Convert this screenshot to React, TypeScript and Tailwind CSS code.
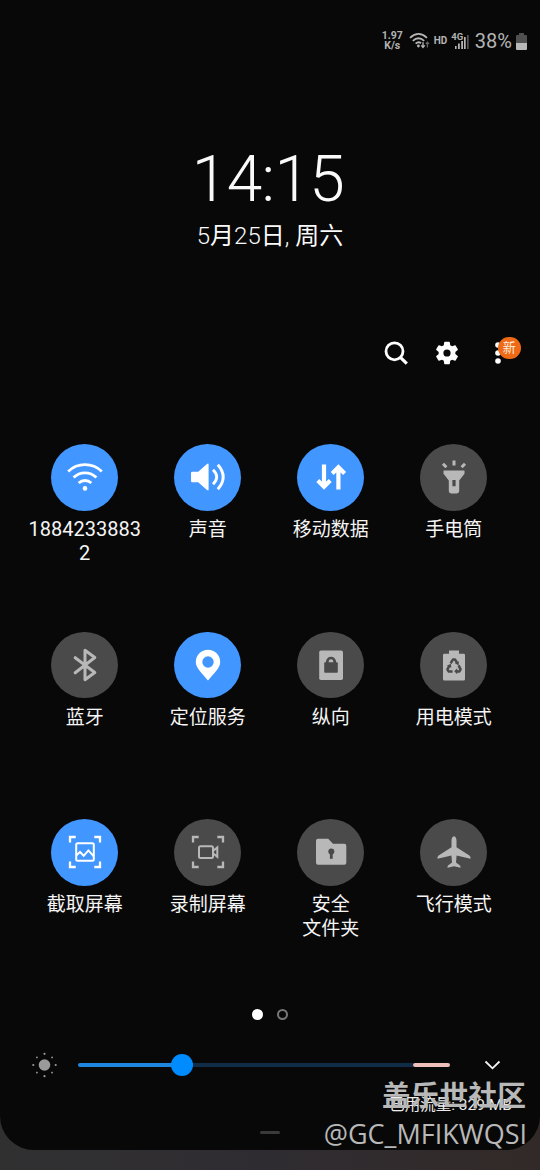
import React from 'react';

interface TileData {
  id: string;
  lines: string[];
  active: boolean;
  icon: React.ReactNode;
}

const Corners = () => (
  <path
    d="M-15-9.5V-15h5.7M9.3-15H15v5.5M15 9.5V15H9.3M-9.3 15H-15V9.5"
    fill="none"
    stroke="currentColor"
    strokeWidth="2.3"
  />
);

const TILES: TileData[] = [
  {
    id: 'wifi',
    lines: ['1884233883', '2'],
    active: true,
    icon: (
      <g fill="none" stroke="currentColor" strokeWidth="2.8">
        <path d="M-16.8-5.6A24 24 0 0 1 16.8-5.6" />
        <path d="M-11.4.6A16 16 0 0 1 11.4.6" />
        <path d="M-6.3 6A9.2 9.2 0 0 1 6.3 6" />
        <circle cy="11.4" r="2.3" fill="currentColor" stroke="none" />
      </g>
    ),
  },
  {
    id: 'sound',
    lines: ['声音'],
    active: true,
    icon: (
      <>
        <path d="M-15.8-5.2H-9.8L-1-13.1Q.6-14.2.6-12.6V12.6Q.6 14.2-1 13.1L-9.8 5.2H-15.8Q-17 5.2-17 4V-4Q-17-5.2-15.8-5.2Z" fill="currentColor" />
        <path d="M5-7.3Q12.4 0 5 7.3M9.8-12.2Q20.6 0 9.8 12.2" fill="none" stroke="currentColor" strokeWidth="2.9" />
      </>
    ),
  },
  {
    id: 'data',
    lines: ['移动数据'],
    active: true,
    icon: (
      <g fill="none" stroke="currentColor" strokeWidth="4.2">
        <path d="M-7-12.6V9M-13.2 3.6L-7 9.8L-.8 3.6" />
        <path d="M7.4 12.6V-9M1.2-3.6L7.4-9.8L13.6-3.6" />
      </g>
    ),
  },
  {
    id: 'torch',
    lines: ['手电筒'],
    active: false,
    icon: (
      <>
        <path
          fillRule="evenodd"
          d="M-10.5-6.5H10.5V-3.2L5.2 3.5V14Q5.2 16.4 2.8 16.4H-2.8Q-5.2 16.4-5.2 14V3.5L-10.5-3.2ZM-1.6 3V9.2H1.6V3Z"
          fill="currentColor"
        />
        <path d="M0-16.4V-11.6M-11-13.2L-7.6-9.8M11-13.2L7.6-9.8" stroke="currentColor" strokeWidth="3" />
      </>
    ),
  },
  {
    id: 'bluetooth',
    lines: ['蓝牙'],
    active: false,
    icon: (
      <path
        d="M-9.8-7.3L9.8 7.5L0 14.7V-14.7L9.8-7.5L-9.8 7.8"
        fill="none"
        stroke="currentColor"
        strokeWidth="3"
        strokeLinejoin="round"
        strokeLinecap="round"
      />
    ),
  },
  {
    id: 'location',
    lines: ['定位服务'],
    active: true,
    icon: (
      <path
        fillRule="evenodd"
        d="M0 15.6C-5 9-12.2 3.5-12.2-3A12.2 12.2 0 0 1 12.2-3C12.2 3.5 5 9 0 15.6ZM0-8.7A5.7 5.7 0 1 0 0 2.7A5.7 5.7 0 1 0 0-8.7Z"
        fill="currentColor"
      />
    ),
  },
  {
    id: 'portrait',
    lines: ['纵向'],
    active: false,
    icon: (
      <>
        <rect x="-11.8" y="-14.6" width="23.8" height="29.6" rx="1.8" fill="currentColor" />
        <rect x="-6.8" y="-2.7" width="13.6" height="10.4" rx="1" fill="#4a4a4a" />
        <path d="M-3.7-2V-3.3A3.7 3.7 0 0 1 3.7-3.3V-2" fill="none" stroke="#4a4a4a" strokeWidth="2.7" />
      </>
    ),
  },
  {
    id: 'power',
    lines: ['用电模式'],
    active: false,
    icon: (
      <>
        <path d="M-5-14.5H5V-11.3H9.6Q11-11.3 11-9.9V14.2Q11 15.6 9.6 15.6H-9.6Q-11 15.6-11 14.2V-9.9Q-11-11.3-9.6-11.3H-5Z" fill="currentColor" />
        <g fill="none" stroke="#4a4a4a" strokeWidth="2.5" strokeLinejoin="round">
          <path d="M-3.4-1.6L-1-5.6H1L2.8-2.6" />
          <path d="M-1.4 6.4H-5.4L-6.6 4.4L-4.8 1.2" />
          <path d="M4.6.4L6.6 4.4L5.4 6.4H2.6" />
        </g>
        <path d="M.6-1.9L4.8-3.8L4.7.4ZM-7.2.7L-3.2-1.2L-2.6 2.8ZM3.2 3.2V9.2L.2 6.3Z" fill="#4a4a4a" />
      </>
    ),
  },
  {
    id: 'screenshot',
    lines: ['截取屏幕'],
    active: true,
    icon: (
      <>
        <Corners />
        <g fill="none" stroke="currentColor" strokeWidth="2">
          <rect x="-8.8" y="-8.8" width="17.6" height="17.6" rx="1.5" />
          <path d="M-8.8 3.6L-5 0L-1.3 3.8L3.4-1.6L8.8 4.4" />
        </g>
      </>
    ),
  },
  {
    id: 'recorder',
    lines: ['录制屏幕'],
    active: false,
    icon: (
      <>
        <Corners />
        <g fill="none" stroke="currentColor" strokeWidth="2">
          <rect x="-9" y="-5.8" width="14" height="11.8" rx="1.5" />
          <path d="M5.3-1.2L9.3-4.6V4.8L5.3 1.4" />
        </g>
      </>
    ),
  },
  {
    id: 'folder',
    lines: ['安全', '文件夹'],
    active: false,
    icon: (
      <>
        <path d="M-13-13.2H-2.8L2-8.2H13.4Q15.3-8.2 15.3-6.3V10.8Q15.3 12.7 13.4 12.7H-13Q-15 12.7-15 10.8V-11.3Q-15-13.2-13-13.2Z" fill="currentColor" />
        <circle cx=".3" cy="-.6" r="3" fill="#4a4a4a" />
        <path d="M.3 0V6.8" stroke="#4a4a4a" strokeWidth="2.8" />
      </>
    ),
  },
  {
    id: 'airplane',
    lines: ['飞行模式'],
    active: false,
    icon: (
      <path
        d="M0-15.8C1.7-15.8 2.5-13.5 2.5-11.5V-4.8L15.4 3.4Q17 4.6 16.5 6.8L2.6 3.4L2 10.5L6 13.4Q6.7 14.2 6.5 15.7L0 14.3L-6.5 15.7Q-6.7 14.2-6 13.4L-2 10.5L-2.6 3.4L-16.5 6.8Q-17 4.6-15.4 3.4L-2.5-4.8V-11.5C-2.5-13.5-1.7-15.8 0-15.8Z"
        fill="currentColor"
      />
    ),
  },
];

const Tile = ({ tile }: { tile: TileData }) => (
  <div className="flex h-[187.5px] flex-col items-center">
    <div
      className={`flex size-[66.5px] shrink-0 items-center justify-center rounded-full ${
        tile.active ? 'bg-[#4296ff] text-white' : 'bg-[#4a4a4a] text-[#b8b8b8]'
      }`}
    >
      <svg width="40" height="40" viewBox="-20 -20 40 40">
        {tile.icon}
      </svg>
    </div>
    <div className="mt-[7.5px] text-center text-[19px] leading-[23.5px] whitespace-nowrap text-[#f5f5f5]">
      {tile.lines.map((line) => (
        <div key={line} className={tile.id === 'wifi' ? 'text-[20px]' : ''}>
          {line}
        </div>
      ))}
    </div>
  </div>
);

const StatusBar = () => (
  <div className="flex h-[82px] items-center justify-end pr-[13px] text-[#b4b4b4]">
    <div className="text-center text-[10.5px] leading-[10px] font-bold">
      <div>1.97</div>
      <div>K/s</div>
    </div>
    <svg className="ml-[6px]" width="21" height="18" viewBox="0 0 21 18" fill="none" stroke="currentColor">
      <path d="M1 5.8Q9.5-2 18 5.8M3.8 8.8Q9.5 3.6 15.2 8.8M6.6 11.6Q9.5 9 12 11.2" strokeWidth="1.8" />
      <circle cx="9.4" cy="14" r="1.4" fill="currentColor" stroke="none" />
      <path d="M14 10.2V15M12.2 13.4L14 15.4L15.8 13.4" strokeWidth="1.4" />
      <path d="M18.4 15.5V10.5M16.8 12L18.4 10.2L20 12" stroke="#666" strokeWidth="1.2" />
    </svg>
    <div className="ml-[4px] text-[10px] leading-none font-bold">HD</div>
    {/* 4G + barras de sinal */}
    <div className="relative ml-[4px] h-[18px] w-[18px]">
      <span className="absolute top-0 left-0 text-[9.5px] leading-[9px] font-bold">4G</span>
      <svg className="absolute inset-0" width="18" height="18" viewBox="0 0 18 18">
        <path d="M4 14h1.6v3H4zM7 11.5h1.8V17H7zM10.2 9h1.8v8h-1.8zM13 5h1.7v12H13z" fill="currentColor" />
        <path d="M16 3h1.7v14H16z" fill="#555" />
      </svg>
    </div>
    <div className="ml-[5.5px] text-[20px] leading-none">38%</div>
    <svg className="ml-[4px]" width="11" height="17" viewBox="0 0 11 17">
      <path d="M3 0h5v2h2q1 0 1 1v7H0V3q0-1 1-1h2z" fill="#505050" />
      <path d="M0 10h11v6q0 1-1 1H1q-1 0-1-1z" fill="#b8b8b8" />
    </svg>
  </div>
);

const Toolbar = () => (
  <div className="flex h-[30px] items-center pl-[384px] text-white">
    <svg width="24" height="24" viewBox="0 0 24 24" fill="none" stroke="currentColor">
      <circle cx="10.5" cy="10.3" r="8.5" strokeWidth="2.8" />
      <path d="M16.4 16.4L22.8 22.6" strokeWidth="3.2" />
    </svg>
    <svg className="ml-[25px]" width="28" height="28" viewBox="0 0 24 24" fill="currentColor">
      <path d="M19.14 12.94c.04-.3.06-.61.06-.94s-.02-.64-.07-.94l2.03-1.58a.49.49 0 0 0 .12-.61l-1.92-3.32a.49.49 0 0 0-.59-.22l-2.39.96a7 7 0 0 0-1.62-.94l-.36-2.54a.48.48 0 0 0-.48-.41h-3.84a.48.48 0 0 0-.47.41l-.36 2.54a7.4 7.4 0 0 0-1.62.94l-2.39-.96a.48.48 0 0 0-.59.22L2.74 8.87a.48.48 0 0 0 .12.61l2.03 1.58a6 6 0 0 0 0 1.88l-2.03 1.58a.49.49 0 0 0-.12.61l1.92 3.32c.12.22.37.29.59.22l2.39-.96c.5.38 1.03.7 1.62.94l.36 2.54c.05.24.24.41.48.41h3.84c.24 0 .44-.17.47-.41l.36-2.54a7 7 0 0 0 1.62-.94l2.39.96c.22.08.47 0 .59-.22l1.92-3.32a.48.48 0 0 0-.12-.61zM12 15.1a3.1 3.1 0 1 1 0-6.2 3.1 3.1 0 0 1 0 6.2" />
    </svg>
    <div className="relative ml-[34px]">
      <svg width="6" height="22" viewBox="0 0 6 22" fill="currentColor">
        <circle cx="3" cy="3" r="2.8" />
        <circle cx="3" cy="11" r="2.8" />
        <circle cx="3" cy="19" r="2.8" />
      </svg>
      <span className="absolute -top-[5.5px] left-[3px] flex size-[22.5px] items-center justify-center rounded-full bg-[#ee6a17] text-[13px] leading-none text-[#ffe9dc]">
        新
      </span>
    </div>
  </div>
);

const BrightnessRow = () => (
  <div className="flex h-[26px] items-center pl-[32px]">
    <svg width="26" height="26" viewBox="-12.5 -13 26 26" fill="#9a9a9a">
      <circle r="5.8" />
      {[0, 45, 90, 135, 180, 225, 270, 315].map((deg) => (
        <circle key={deg} cy={deg % 90 === 0 ? -11.2 : -10.7} r={deg % 90 === 0 ? 1.1 : 0.9} transform={`rotate(${deg})`} />
      ))}
    </svg>
    <div className="relative ml-[20px] flex h-[4px] w-[372px] overflow-visible">
      <div className="w-[104px] rounded-l-full bg-[#1f86e0]" />
      <div className="w-[231px] bg-[#102c47]" />
      <div className="w-[37px] rounded-full bg-[#f0bfbc]" />
      <div className="absolute -top-[9px] left-[93px] size-[22px] rounded-full bg-[#008cff]" />
    </div>
    <svg className="ml-[34px]" width="17" height="10" viewBox="0 0 17 10" fill="none" stroke="#f5f5f5" strokeWidth="1.8">
      <path d="M1.5 1.5L8.5 8.3L15.5 1.5" />
    </svg>
  </div>
);

export default function App() {
  return (
    <div className="relative h-[1170px] w-[540px] overflow-hidden bg-linear-to-r from-[#303031] via-[#2f2c31] to-[#322a28] font-['Roboto','Noto_Sans_CJK_SC',sans-serif]">
      <div className="flex h-[1150px] flex-col rounded-b-[34px] bg-[#080808]">
        <StatusBar />

        <div className="flex h-[256px] flex-col items-center text-[#fafafa]">
          <div className="mt-[65px] pr-[4px] text-[64px] leading-[65px] font-light tracking-[-0.6px]">14:15</div>
          <div className="mt-[10px] text-[24px] leading-[28px] font-light">
            5<span className="font-normal">月</span>25<span className="font-normal">日</span>,{' '}
            <span className="font-normal">周六</span>
          </div>
        </div>

        <Toolbar />

        <div className="mt-[76px] grid grid-cols-[repeat(4,123px)] pl-[23.2px]">
          {TILES.map((tile) => (
            <Tile key={tile.id} tile={tile} />
          ))}
        </div>

        <div className="mt-[2px] flex h-[12px] items-center justify-center gap-[14px]">
          <span className="size-[11px] rounded-full bg-white" />
          <span className="size-[11px] rounded-full border-2 border-[#777]" />
        </div>

        <div className="mt-[31px]">
          <BrightnessRow />
        </div>

        <div className="mt-[17px] h-[20px] pr-[28px] text-right text-[15.5px] leading-[20px] text-[#eee]">已用流量: 329 MB</div>
        <div className="mx-auto mt-[16px] h-[3px] w-[20px] rounded-full bg-[#3a3a3a]" />
      </div>

      {/* Marca d'água sobre o painel */}
      <div className="absolute top-[1078px] right-[13px] text-right whitespace-nowrap text-[#b8b8b8]">
        <div className="pr-px text-[28.8px] leading-[36px] font-bold">盖乐世社区</div>
        <div className="font-['Open_Sans',sans-serif] text-[27px] leading-[40px]">@GC_MFIKWQSI</div>
      </div>
    </div>
  );
}
